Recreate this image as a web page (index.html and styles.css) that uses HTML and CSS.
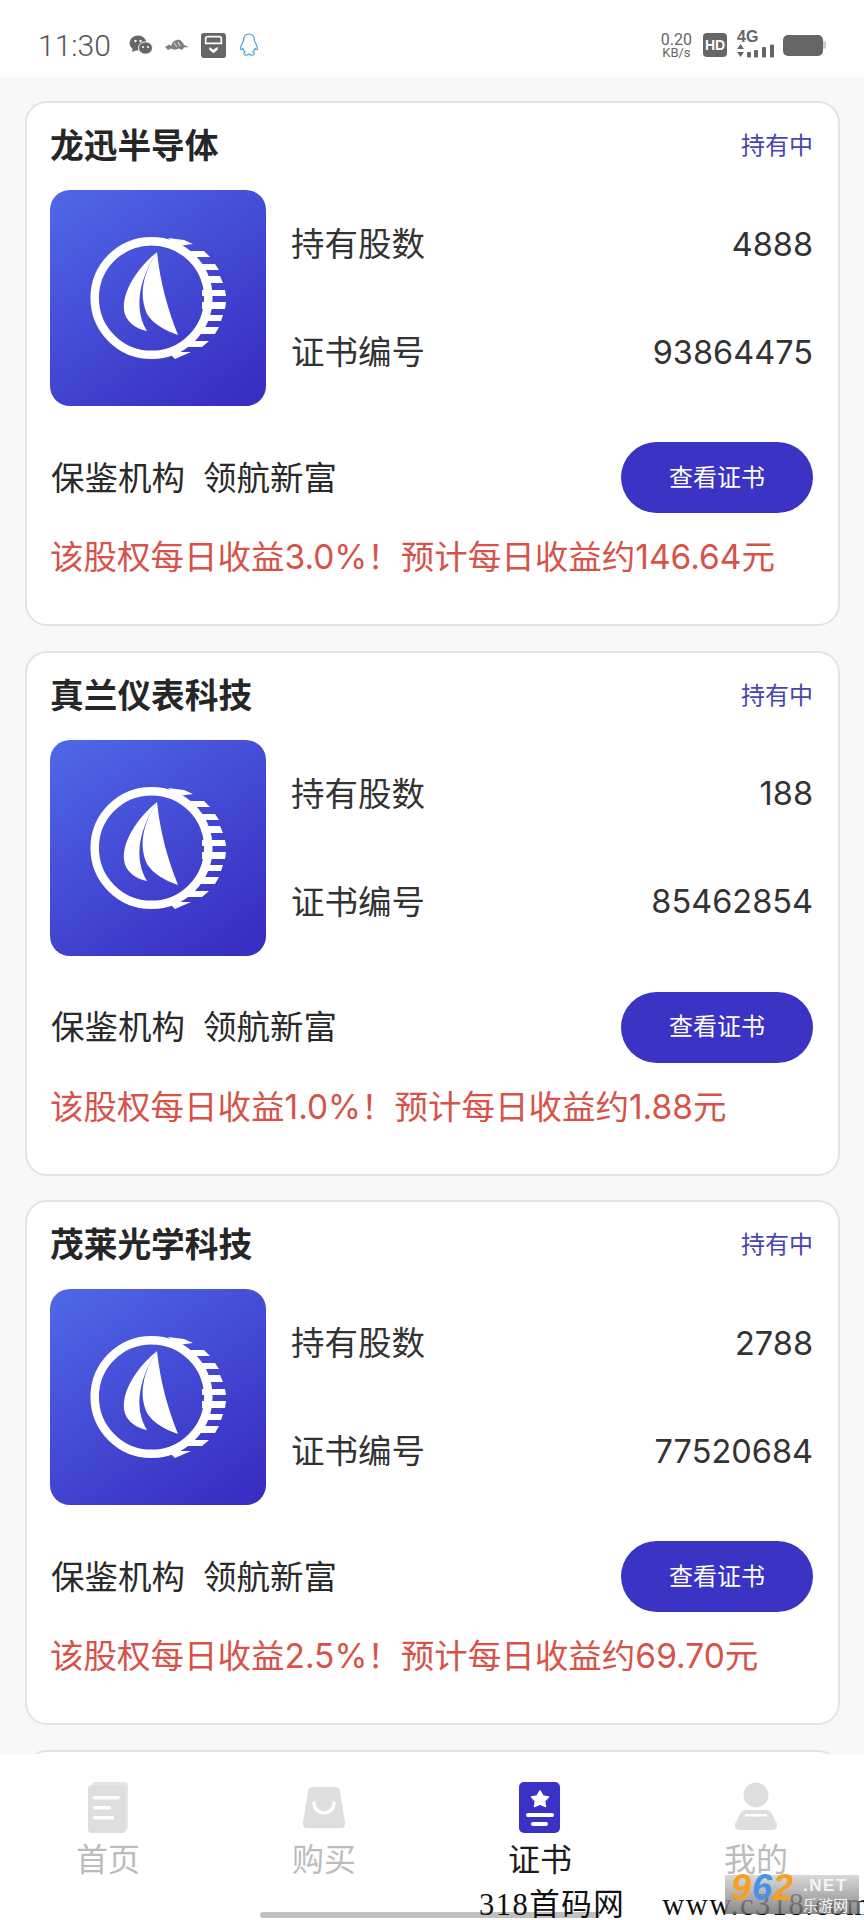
FILE: index.html
```html
<!DOCTYPE html>
<html lang="zh-CN">
<head>
<meta charset="utf-8">
<title>证书</title>
<link rel="stylesheet" href="styles.css">
</head>
<body>
<svg class="defs" width="0" height="0" aria-hidden="true">
  <defs>
    <linearGradient id="coinbg" x1="0.1" y1="0" x2="0.8" y2="1">
      <stop offset="0" stop-color="#4e66e6"/>
      <stop offset="1" stop-color="#392ec2"/>
    </linearGradient>
    <symbol id="coin" viewBox="0 0 216 216">
      <rect width="216" height="216" rx="20" fill="url(#coinbg)"/>
      <g fill="#fff">
        <path d="M118 48L134 50L143 54L128 56z"/>
        <path d="M135 61H154L160 67H140z"/>
        <path d="M146 74H165L169 80H150z"/>
        <path d="M150 86H170L173 93H152z"/>
        <path d="M152 100H175L176 106H152z"/>
        <path d="M152 112H176L175 119H152z"/>
        <path d="M152 125H173L171 131H152z"/>
        <path d="M148 137H169L165 144H146z"/>
        <path d="M140 151H159L152 157H134z"/>
        <path d="M120 164L128 162H141L134 165L125 169z"/>
      </g>
      <circle cx="101.500" cy="108" r="56.800" fill="none" stroke="#fff" stroke-width="8.500"/>
      <path fill="#fff" d="M107 62C92 74 72 98 74 120C75 131 86 139 97 141C86 123 85 96 107 62Z"/>
      <path fill="#fff" d="M107 62C92 85 89 106 97 124C103 134 116 141 128 145C118 120 110 92 107 62Z"/>
    </symbol>
  </defs>
</svg>

<div class="phone">
  <header class="statusbar">
    <div class="status-left">
      <span class="time">11:30</span>
      <svg class="ic-wechat" viewBox="0 0 24 20"><ellipse cx="9" cy="8" rx="8.500" ry="7.500" fill="#666"/><path d="M4 13l-1 4 5-2z" fill="#666"/><ellipse cx="16.500" cy="13" rx="7" ry="6.200" fill="#666" stroke="#fff" stroke-width="1"/><circle cx="6.500" cy="6" r="1.200" fill="#fff"/><circle cx="11.500" cy="6" r="1.200" fill="#fff"/><circle cx="14" cy="12" r="1" fill="#fff"/><circle cx="19" cy="12" r="1" fill="#fff"/></svg>
      <svg class="ic-fish" viewBox="0 0 24 12"><path d="M0 8L4 5.500L6 7C7 3 11 0 15 1C17 2 18 4 19 6L24 8L19 8.500L17 11L14 9.500C11 11 8 11 6 9.500L3 11Z" fill="#808080"/><path d="M9 4L12 8M13 3L15 7" stroke="#fff" stroke-width=".8"/></svg>
      <svg class="ic-box" viewBox="0 0 24 24"><rect width="24" height="24" rx="3" fill="#666"/><path d="M4.500 10V5.500a2 2 0 0 1 2-2h11a2 2 0 0 1 2 2V10z" fill="none" stroke="#fff" stroke-width="1.600"/><path d="M8 13.500l2.500 1.500L12 16l2-1.500 2-1v2.500l-4 3.500-4-3.500z" fill="#fff"/></svg>
      <svg class="ic-qq" viewBox="0 0 20 24"><path d="M10 1C6 1 4.500 4 4.500 8C3 11 1 14 1.500 16C2 17 3 16.500 4 15.500C4.500 17 5 18 6 19C4.500 20 4 21.500 6 22C8 22.500 9.500 21.500 10 21C10.500 21.500 12 22.500 14 22C16 21.500 15.500 20 14 19C15 18 15.500 17 16 15.500C17 16.500 18 17 18.500 16C19 14 17 11 15.500 8C15.500 4 14 1 10 1Z" fill="#fff" stroke="#4aa3dc" stroke-width="1.200"/></svg>
    </div>
    <div class="status-right">
      <div class="speed"><span>0.20</span><span>KB/s</span></div>
      <span class="hd">HD</span>
      <div class="net">
        <span class="net-4g">4G</span>
        <svg class="ic-signal" viewBox="0 0 38 14"><path d="M0 5l3.500-5L7 5zM0 8h7l-3.500 5z" fill="#666"/><rect x="10" y="8" width="4" height="5.500" rx="1" fill="#666"/><rect x="17" y="6" width="4" height="7.500" rx="1" fill="#666"/><rect x="25" y="3" width="4" height="10.500" rx="1" fill="#666"/><rect x="33" y="0.500" width="4" height="13" rx="1" fill="#666"/></svg>
      </div>
      <div class="battery"><span class="battery-body"></span><span class="battery-tip"></span></div>
    </div>
  </header>

  <main class="list">
    <article class="card">
      <div class="card-head"><h2 class="card-title">龙迅半导体</h2><span class="card-state">持有中</span></div>
      <div class="card-main">
        <svg class="coin"><use href="#coin"/></svg>
        <div class="facts">
          <div class="fact"><span class="fact-label">持有股数</span><span class="fact-value">4888</span></div>
          <div class="fact"><span class="fact-label">证书编号</span><span class="fact-value">93864475</span></div>
        </div>
      </div>
      <div class="card-foot"><span class="issuer"><span>保鉴机构</span><span>领航新富</span></span><button class="cert-btn">查看证书</button></div>
      <p class="yield">该股权每日收益3.0%！预计每日收益约146.64元</p>
    </article>
    <article class="card">
      <div class="card-head"><h2 class="card-title">真兰仪表科技</h2><span class="card-state">持有中</span></div>
      <div class="card-main">
        <svg class="coin"><use href="#coin"/></svg>
        <div class="facts">
          <div class="fact"><span class="fact-label">持有股数</span><span class="fact-value">188</span></div>
          <div class="fact"><span class="fact-label">证书编号</span><span class="fact-value">85462854</span></div>
        </div>
      </div>
      <div class="card-foot"><span class="issuer"><span>保鉴机构</span><span>领航新富</span></span><button class="cert-btn">查看证书</button></div>
      <p class="yield">该股权每日收益1.0%！预计每日收益约1.88元</p>
    </article>
    <article class="card">
      <div class="card-head"><h2 class="card-title">茂莱光学科技</h2><span class="card-state">持有中</span></div>
      <div class="card-main">
        <svg class="coin"><use href="#coin"/></svg>
        <div class="facts">
          <div class="fact"><span class="fact-label">持有股数</span><span class="fact-value">2788</span></div>
          <div class="fact"><span class="fact-label">证书编号</span><span class="fact-value">77520684</span></div>
        </div>
      </div>
      <div class="card-foot"><span class="issuer"><span>保鉴机构</span><span>领航新富</span></span><button class="cert-btn">查看证书</button></div>
      <p class="yield">该股权每日收益2.5%！预计每日收益约69.70元</p>
    </article>
    <article class="card"></article>
  </main>

  <nav class="tabbar">
    <div class="tab">
      <svg class="tab-ic" viewBox="0 0 44 52"><rect x="6" y="0" width="36" height="48" rx="3" fill="#e6e6e6"/><rect x="2" y="3" width="38" height="48" rx="4" fill="#dedede"/><rect x="7" y="14" width="27" height="3.500" rx="1.700" fill="#fff"/><rect x="7" y="24" width="18" height="3.500" rx="1.700" fill="#fff"/><rect x="7" y="34" width="21" height="3.500" rx="1.700" fill="#fff"/></svg>
      <span>首页</span>
    </div>
    <div class="tab">
      <svg class="tab-ic" viewBox="0 0 48 52"><path d="M11 3H37Q40 3 41 6L47 42Q47 48 43 48H5Q1 48 1 42L7 6Q8 3 11 3Z" fill="#dedede"/><path d="M13 20C13 35 35 35 35 20" fill="none" stroke="#fff" stroke-width="3.500" stroke-linecap="round"/></svg>
      <span>购买</span>
    </div>
    <div class="tab tab-active">
      <svg class="tab-ic" viewBox="0 0 42 52"><rect width="41" height="51" rx="5" fill="#3a32c4"/><path d="M21 9l3 5 5.500 1-4 4 1 5.500-5.500-2.500-5.500 2.500 1-5.500-4-4 5.500-1z" fill="#fff" stroke="#fff" stroke-width="1.500" stroke-linejoin="round"/><rect x="7" y="31" width="28" height="4" rx="2" fill="#fff"/><rect x="12" y="40" width="17" height="4" rx="2" fill="#fff"/></svg>
      <span>证书</span>
    </div>
    <div class="tab">
      <svg class="tab-ic" viewBox="0 0 44 52"><circle cx="22" cy="13" r="12.500" fill="#dedede"/><path d="M12 28H32Q36 28 38 32L43 42Q44 48 38 48H6Q0 48 1 42L6 32Q8 28 12 28Z" fill="#dedede"/><rect x="11" y="32" width="22" height="2.500" fill="#fff"/></svg>
      <span>我的</span>
    </div>
  </nav>
  <div class="home-bar"></div>
  <div class="mark-text"><span>318首码网</span><span>www.c318.com</span></div>
  <div class="mark-logo">
    <span class="mark-num"><span class="num-o">9</span><span class="num-b">6</span><span class="num-o">2</span></span>
    <span class="mark-net">.NET</span>
    <span class="mark-cn">乐游网</span>
  </div>
</div>
</body>
</html>
```
FILE: styles.css
```css
* { box-sizing: border-box; }
html, body { margin: 0; padding: 0; }
body {
  font-family: "Noto Sans CJK SC", sans-serif;
  background: #f8f8f8;
  color: #2a2a2a;
}
.defs { position: absolute; }
.phone {
  position: relative;
  width: 864px;
  height: 1920px;
  overflow: hidden;
  background: #f8f8f8;
}
.statusbar {
  height: 77px;
  background: #fff;
  display: flex;
  justify-content: space-between;
  align-items: center;
  padding: 13px 38px 0 38px;
  color: #666;
}
.status-left { display: flex; align-items: center; }
.time { font-family: "Roboto", sans-serif; font-size: 30px; font-weight: 300; color: #555; }
.ic-wechat { width: 24px; height: 20px; margin-left: 18px; }
.ic-fish { width: 24px; height: 12px; margin-left: 12px; }
.ic-box { width: 25px; height: 25px; margin-left: 12px; }
.ic-qq { width: 20px; height: 24px; margin-left: 13px; }
.status-right { display: flex; align-items: center; }
.speed {
  display: flex;
  flex-direction: column;
  align-items: center;
  font-family: "Roboto", sans-serif;
  font-size: 13px;
  line-height: 11px;
  color: #666;
}
.speed span:first-child { font-size: 16px; line-height: 14px; }
.hd {
  width: 24px;
  height: 24px;
  margin-left: 11px;
  border-radius: 4px;
  background: #666;
  color: #fff;
  font: 700 14px/24px "Liberation Sans", sans-serif;
  text-align: center;
}
.net { width: 38px; margin-left: 10px; position: relative; height: 26px; }
.net-4g { position: absolute; left: 0; top: -2px; font: 700 16px/14px "Liberation Sans", sans-serif; color: #666; }
.ic-signal { position: absolute; left: 0; top: 12px; width: 38px; height: 14px; }
.battery { display: flex; align-items: center; margin-left: 8px; }
.battery-body { width: 40px; height: 21px; border-radius: 5px; background: #666; }
.battery-tip { width: 3px; height: 8px; background: #ccc; border-radius: 0 2px 2px 0; }

.list {
  display: flex;
  flex-direction: column;
  gap: 24.500px;
  padding: 24px 24px 0 25px;
}
.card {
  flex: none;
  height: 525px;
  background: #fff;
  border: 2px solid #e4e4e4;
  border-radius: 22px;
  padding: 0 25px 0 23px;
}
.card-head {
  height: 87px;
  padding-bottom: 5px;
  display: flex;
  justify-content: space-between;
  align-items: center;
}
.card-title { margin: 0; font-size: 33.700px; font-weight: 700; line-height: 46px; color: #262626; }
.card-state { font-size: 24px; line-height: 34px; color: #4a44ae; }
.card-main { display: flex; gap: 25px; }
.coin { width: 216px; height: 216px; flex: none; }
.facts {
  flex: 1;
  display: flex;
  flex-direction: column;
  justify-content: center;
  gap: 54px;
}
.fact {
  height: 54px;
  display: flex;
  justify-content: space-between;
  align-items: center;
  font-size: 33.500px;
  color: #333;
}
.fact-label { padding-bottom: 5px; }
.fact-value { font-family: "Inter", sans-serif; font-size: 32.500px; }
.card-foot {
  margin-top: 36px;
  display: flex;
  justify-content: space-between;
  align-items: center;
}
.issuer { display: flex; gap: 18px; font-size: 33.500px; color: #2a2a2a; padding: 0 0 5px 1px; }
.cert-btn {
  width: 192px;
  height: 71px;
  border: 0;
  padding: 0 0 5px;
  border-radius: 36px;
  background: #3a33c4;
  color: #fff;
  font-family: inherit;
  font-size: 24px;
}
.yield {
  margin: 21px 0 0;
  font-family: "Inter", "Noto Sans CJK SC", sans-serif;
  font-size: 33.500px;
  line-height: 46px;
  color: #d6534a;
  white-space: nowrap;
}

.tabbar {
  position: absolute;
  left: 0;
  right: 0;
  bottom: 0;
  height: 166px;
  background: #fff;
  display: grid;
  grid-template-columns: repeat(4, 1fr);
  padding: 28px 0 0 0;
}
.tab {
  display: flex;
  flex-direction: column;
  align-items: center;
  gap: 1px;
  font-size: 32px;
  line-height: 44px;
  color: #bcbcbc;
}
.tab-active { color: #1c1c1c; }
.tab-ic { width: 44px; height: 52px; }
.home-bar {
  position: absolute;
  left: 260px;
  top: 1912px;
  width: 340px;
  height: 6px;
  border-radius: 3px;
  background: #c0c0c0;
}
.mark-text {
  position: absolute;
  left: 479px;
  top: 1888px;
  display: flex;
  gap: 37px;
  font-family: "Liberation Serif", "Noto Sans CJK SC", serif;
  font-size: 30.500px;
  line-height: 34px;
  letter-spacing: 1.500px;
  color: #111;
  white-space: nowrap;
}
.mark-logo {
  position: absolute;
  left: 725px;
  top: 1875px;
  width: 134px;
  height: 39px;
  background: linear-gradient(#d0d0d0cc, #6a6a6acc);
}
.mark-num {
  position: absolute;
  left: 6px;
  top: -3px;
  font: italic 700 36px/32px "Liberation Sans", sans-serif;
  letter-spacing: 1px;
}
.num-o { color: #f5a021; }
.num-b { color: #4a90e8; }
.mark-net {
  position: absolute;
  left: 78px;
  top: 1px;
  font: 700 17px/20px "Liberation Sans", sans-serif;
  color: #f4f4f4;
  letter-spacing: 1.500px;
}
.mark-cn {
  position: absolute;
  left: 78px;
  top: 21px;
  font-size: 15px;
  line-height: 18px;
  color: #f4f4f4;
}
```
